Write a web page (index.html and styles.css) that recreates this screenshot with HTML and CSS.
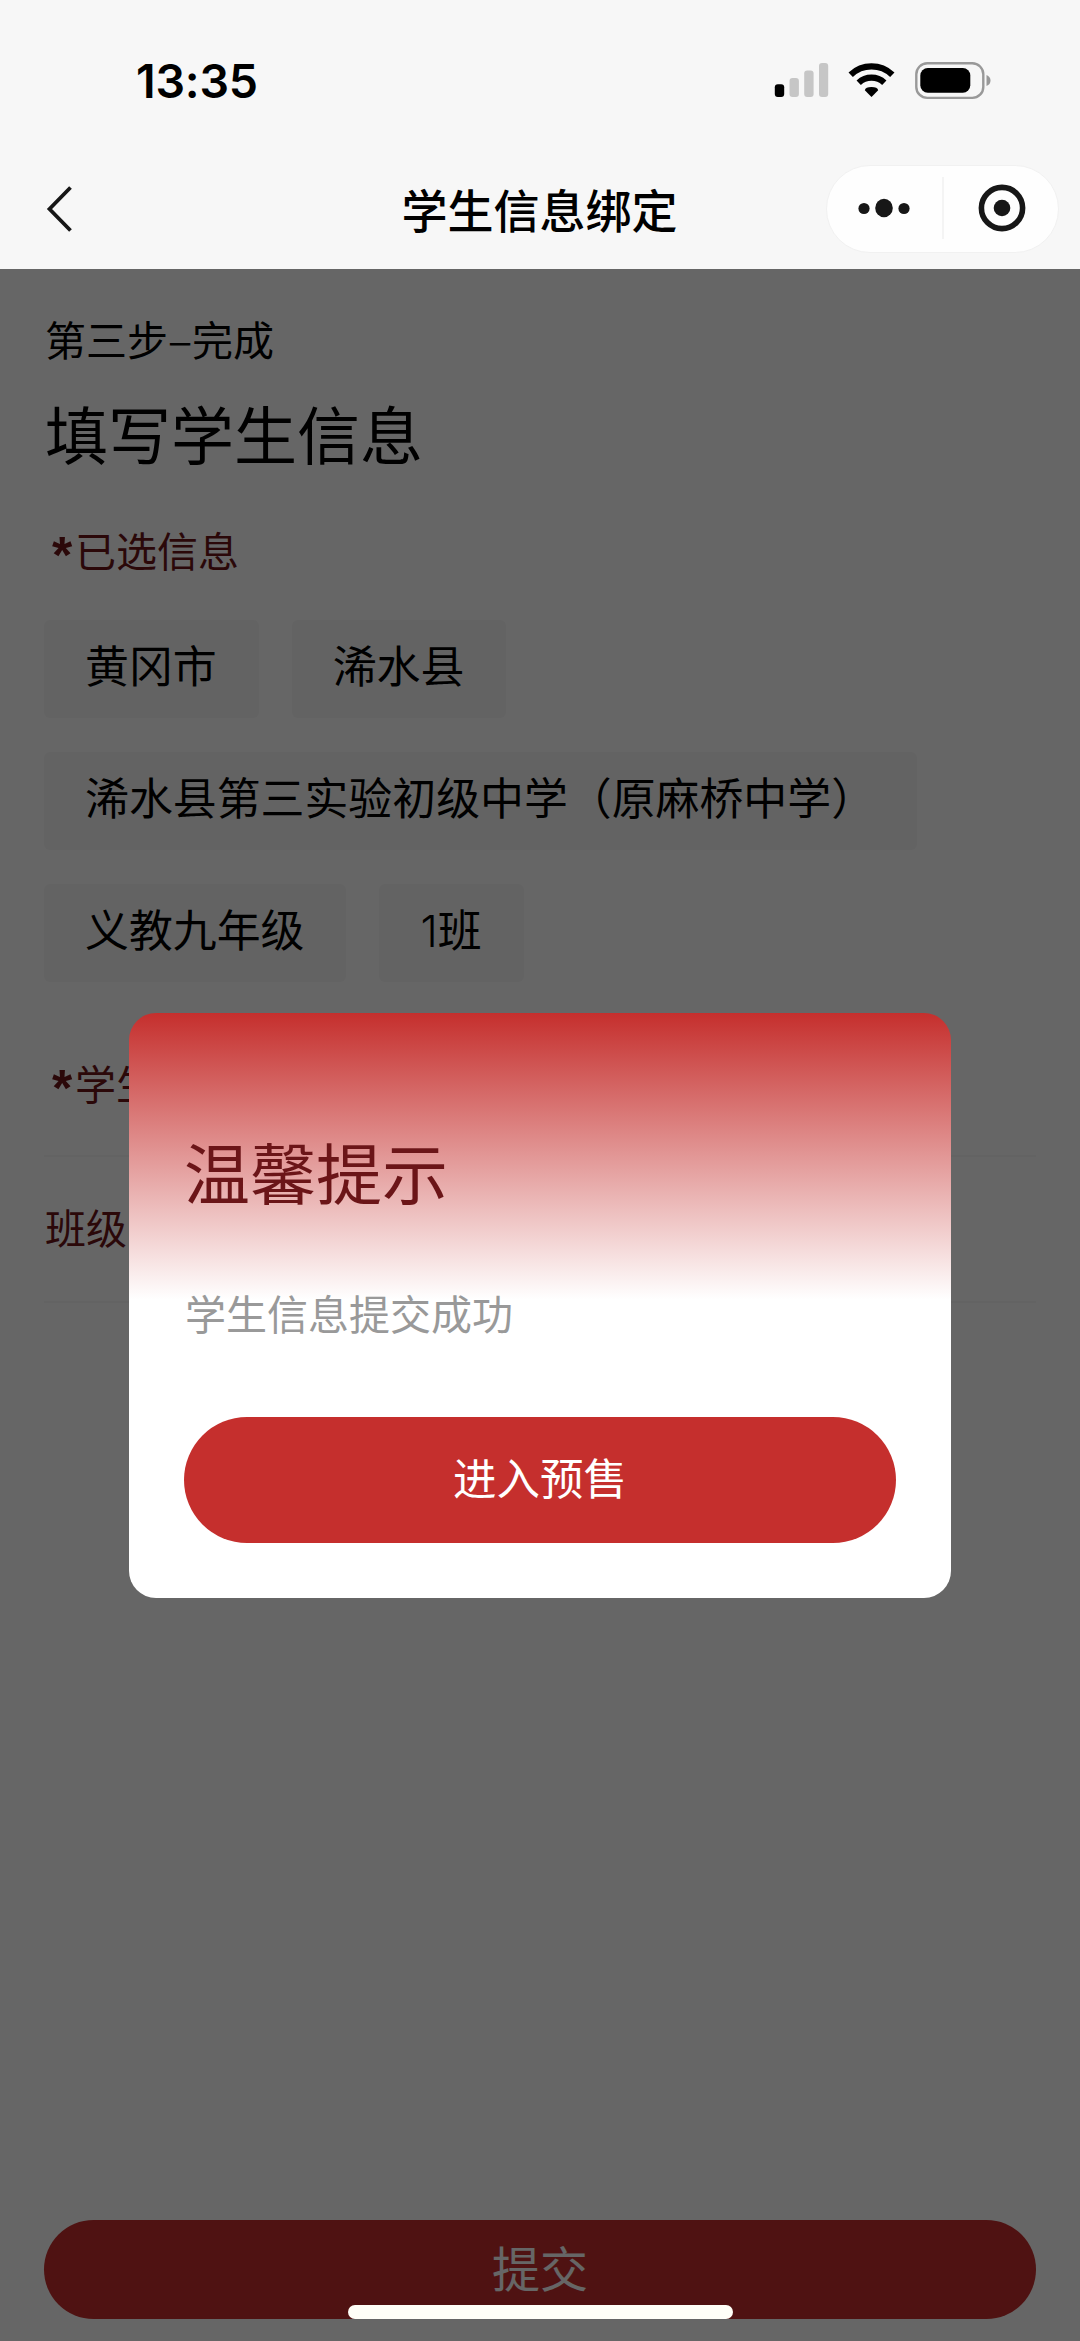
FILE: index.html
```html
<!DOCTYPE html>
<html lang="zh-CN">
<head>
<meta charset="utf-8">
<title>学生信息绑定</title>
<link rel="stylesheet" href="styles.css">
</head>
<body>
<div class="app">
  <header class="header">
    <div class="status">
      <span class="time">13:35</span>
      <svg class="status-icons" width="217" height="38" viewBox="0 0 217 38">
        <rect x="0.8" y="22.3" width="9.4" height="12.8" rx="3"/>
        <g fill="#c6c6c6">
          <rect x="15.5" y="16" width="9.4" height="19.1" rx="3"/>
          <rect x="30.2" y="8.5" width="9.4" height="26.6" rx="3"/>
          <rect x="45" y="1" width="9.2" height="34.1" rx="3"/>
        </g>
        <path d="M97.500 35 L90.800 28.200 Q91.500 25 97.500 25 Q103.500 25 104.200 28.200 Z"/>
        <g fill="none" stroke="#000" stroke-width="6.300">
          <path d="M84.700 20.700 A18.700 18.700 0 0 1 110.300 20.700"/>
          <path d="M76.700 12.700 A30.200 30.200 0 0 1 118.300 12.700"/>
        </g>
        <rect x="142.300" y="1.300" width="67" height="34.600" rx="11" fill="none" stroke="#999" stroke-width="2.400"/>
        <rect x="146.300" y="6" width="50" height="24.800" rx="7.500"/>
        <path d="M212.500 13 Q216.500 14.500 216.500 18.500 Q216.500 22.500 212.500 24 Z" fill="#999"/>
      </svg>
    </div>
    <nav class="nav">
      <svg class="back" width="28" height="50" viewBox="0 0 28 50"><path d="M25.500 3.500 L4.500 25 L25.500 46.500" fill="none" stroke="#171717" stroke-width="3.800"/></svg>
      <h1 class="nav-title">学生信息绑定</h1>
      <div class="capsule">
        <svg class="dots" width="54" height="20" viewBox="0 0 54 20" fill="#171717"><circle cx="7" cy="10.500" r="5.600"/><ellipse cx="27" cy="10" rx="8.800" ry="9.200"/><circle cx="47" cy="10.500" r="5.600"/></svg>
        <span class="divider"></span>
        <svg class="target" width="48" height="48" viewBox="0 0 48 48"><circle cx="24" cy="24" r="20.600" fill="none" stroke="#171717" stroke-width="5.600"/><circle cx="24" cy="24" r="8.300" fill="#171717"/></svg>
      </div>
    </nav>
  </header>

  <main class="page">
    <p class="step">第三步<span class="dash">–</span>完成</p>
    <h2 class="title">填写学生信息</h2>
    <p class="label"><span class="star">*</span>已选信息</p>
    <div class="tags">
      <div class="tag-row"><span class="tag">黄冈市</span><span class="tag">浠水县</span></div>
      <div class="tag-row"><span class="tag">浠水县第三实验初级中学（原麻桥中学）</span></div>
      <div class="tag-row"><span class="tag">义教九年级</span><span class="tag"><span class="num">1</span>班</span></div>
    </div>
    <p class="label label-student"><span class="star">*</span>学生</p>
    <div class="field">班级</div>
    <button class="submit">提交</button>

    <div class="mask">
      <section class="dialog">
        <h3 class="dialog-title">温馨提示</h3>
        <p class="dialog-text">学生信息提交成功</p>
        <button class="dialog-btn">进入预售</button>
      </section>
    </div>
    <div class="home-bar"></div>
  </main>
</div>
</body>
</html>
```
FILE: styles.css
```css
* { box-sizing: border-box; }
body, h1, h2, h3, p { margin: 0; font-weight: 400; }
body { font-family: "Noto Sans CJK SC", sans-serif; color: #000; background: #fff; }
button { border: 0; padding: 0; font: inherit; }

.app { width: 1080px; height: 2341px; display: flex; flex-direction: column; overflow: hidden; }

.header { height: 269px; flex: none; background: #f7f7f7; display: flex; flex-direction: column; }
.status { height: 148px; padding: 14px 89px 0 136px; display: flex; align-items: center; justify-content: space-between; }
.time { font: 600 46.5px/60px Inter, sans-serif; letter-spacing: -.2px; }
.status-icons { display: block; margin-top: -1px; }
.nav { height: 121px; display: grid; grid-template-columns: 1fr auto 1fr; align-items: center; padding: 0 21px 0 45px; }
.back { display: block; }
.nav-title { font-size: 46px; line-height: 66px; font-weight: 500; padding-right: 26px; margin: -2px -26px 0 0; transform: translateX(-12.500px); }
.capsule { justify-self: end; width: 233px; height: 88px; border-radius: 44px; background: #fefefe; border: 1px solid #f1f1f1; display: flex; align-items: center; padding: 0 31px 1px 30px; }
.divider { flex: none; width: 2px; height: 62px; background: #f4f4f4; margin: 0 34px 0 31px; }
.dots, .target { flex: none; display: block; }

.page { position: relative; flex: 1; background: #fff; padding: 40px 44px 22px; display: flex; flex-direction: column; }
.step { font-size: 41px; line-height: 58px; padding-left: 1px; }
.dash { display: inline-block; width: 24px; text-align: center; transform: scaleX(1.12); }
.title { font-size: 63px; line-height: 90px; margin-top: 20px; padding-left: 1px; }
.label { font-size: 41px; line-height: 58px; margin-top: 43px; color: #6b1518; display: flex; }
.star { width: 31px; padding: 6px 0 0 8px; height: 58px; font-family: "Liberation Sans", sans-serif; font-size: 52px; font-weight: 700; }
.tags { display: flex; flex-direction: column; gap: 34px; margin-top: 42px; }
.tag-row { display: flex; gap: 33px; }
.tag { height: 98px; padding: 0 42px 10px 41px; border-radius: 6px; background: #f7f7f7; font-size: 43.900px; line-height: 88px; white-space: nowrap; }
.num { font-family: Inter, sans-serif; font-weight: 300; }
.label-student { margin-top: 71px; }
.field { height: 148px; margin-top: 44px; padding: 0 0 6px 1px; border-top: 2px solid #f7f7f7; border-bottom: 2px solid #f7f7f7; font-size: 41px; line-height: 138px; color: #6b1518; }
.submit { margin-top: auto; height: 99px; flex: none; border-radius: 50px; background: #c52f2d; color: #fff; font-size: 48px; line-height: 90px; padding-bottom: 7px; }

.mask { position: absolute; inset: 0; background: rgba(0, 0, 0, .6); padding: 744px 129px 0; }
.dialog { height: 585px; border-radius: 27px; background: linear-gradient(180deg, #c52f2d 0%, #fff 49%); padding: 111px 55px 55px; display: flex; flex-direction: column; }
.dialog-title { font-size: 66px; line-height: 92px; color: #6b1518; }
.dialog-text { font-size: 41px; line-height: 58px; color: #999; padding-left: 1px; margin-top: 67px; }
.dialog-btn { height: 126px; margin-top: auto; border-radius: 63px; background: #c52f2d; color: #fff; font-size: 43.500px; line-height: 118px; padding-bottom: 7px; }
.home-bar { position: absolute; left: 348px; bottom: 22px; width: 385px; height: 14px; border-radius: 7px; background: #fffff8; }
```
